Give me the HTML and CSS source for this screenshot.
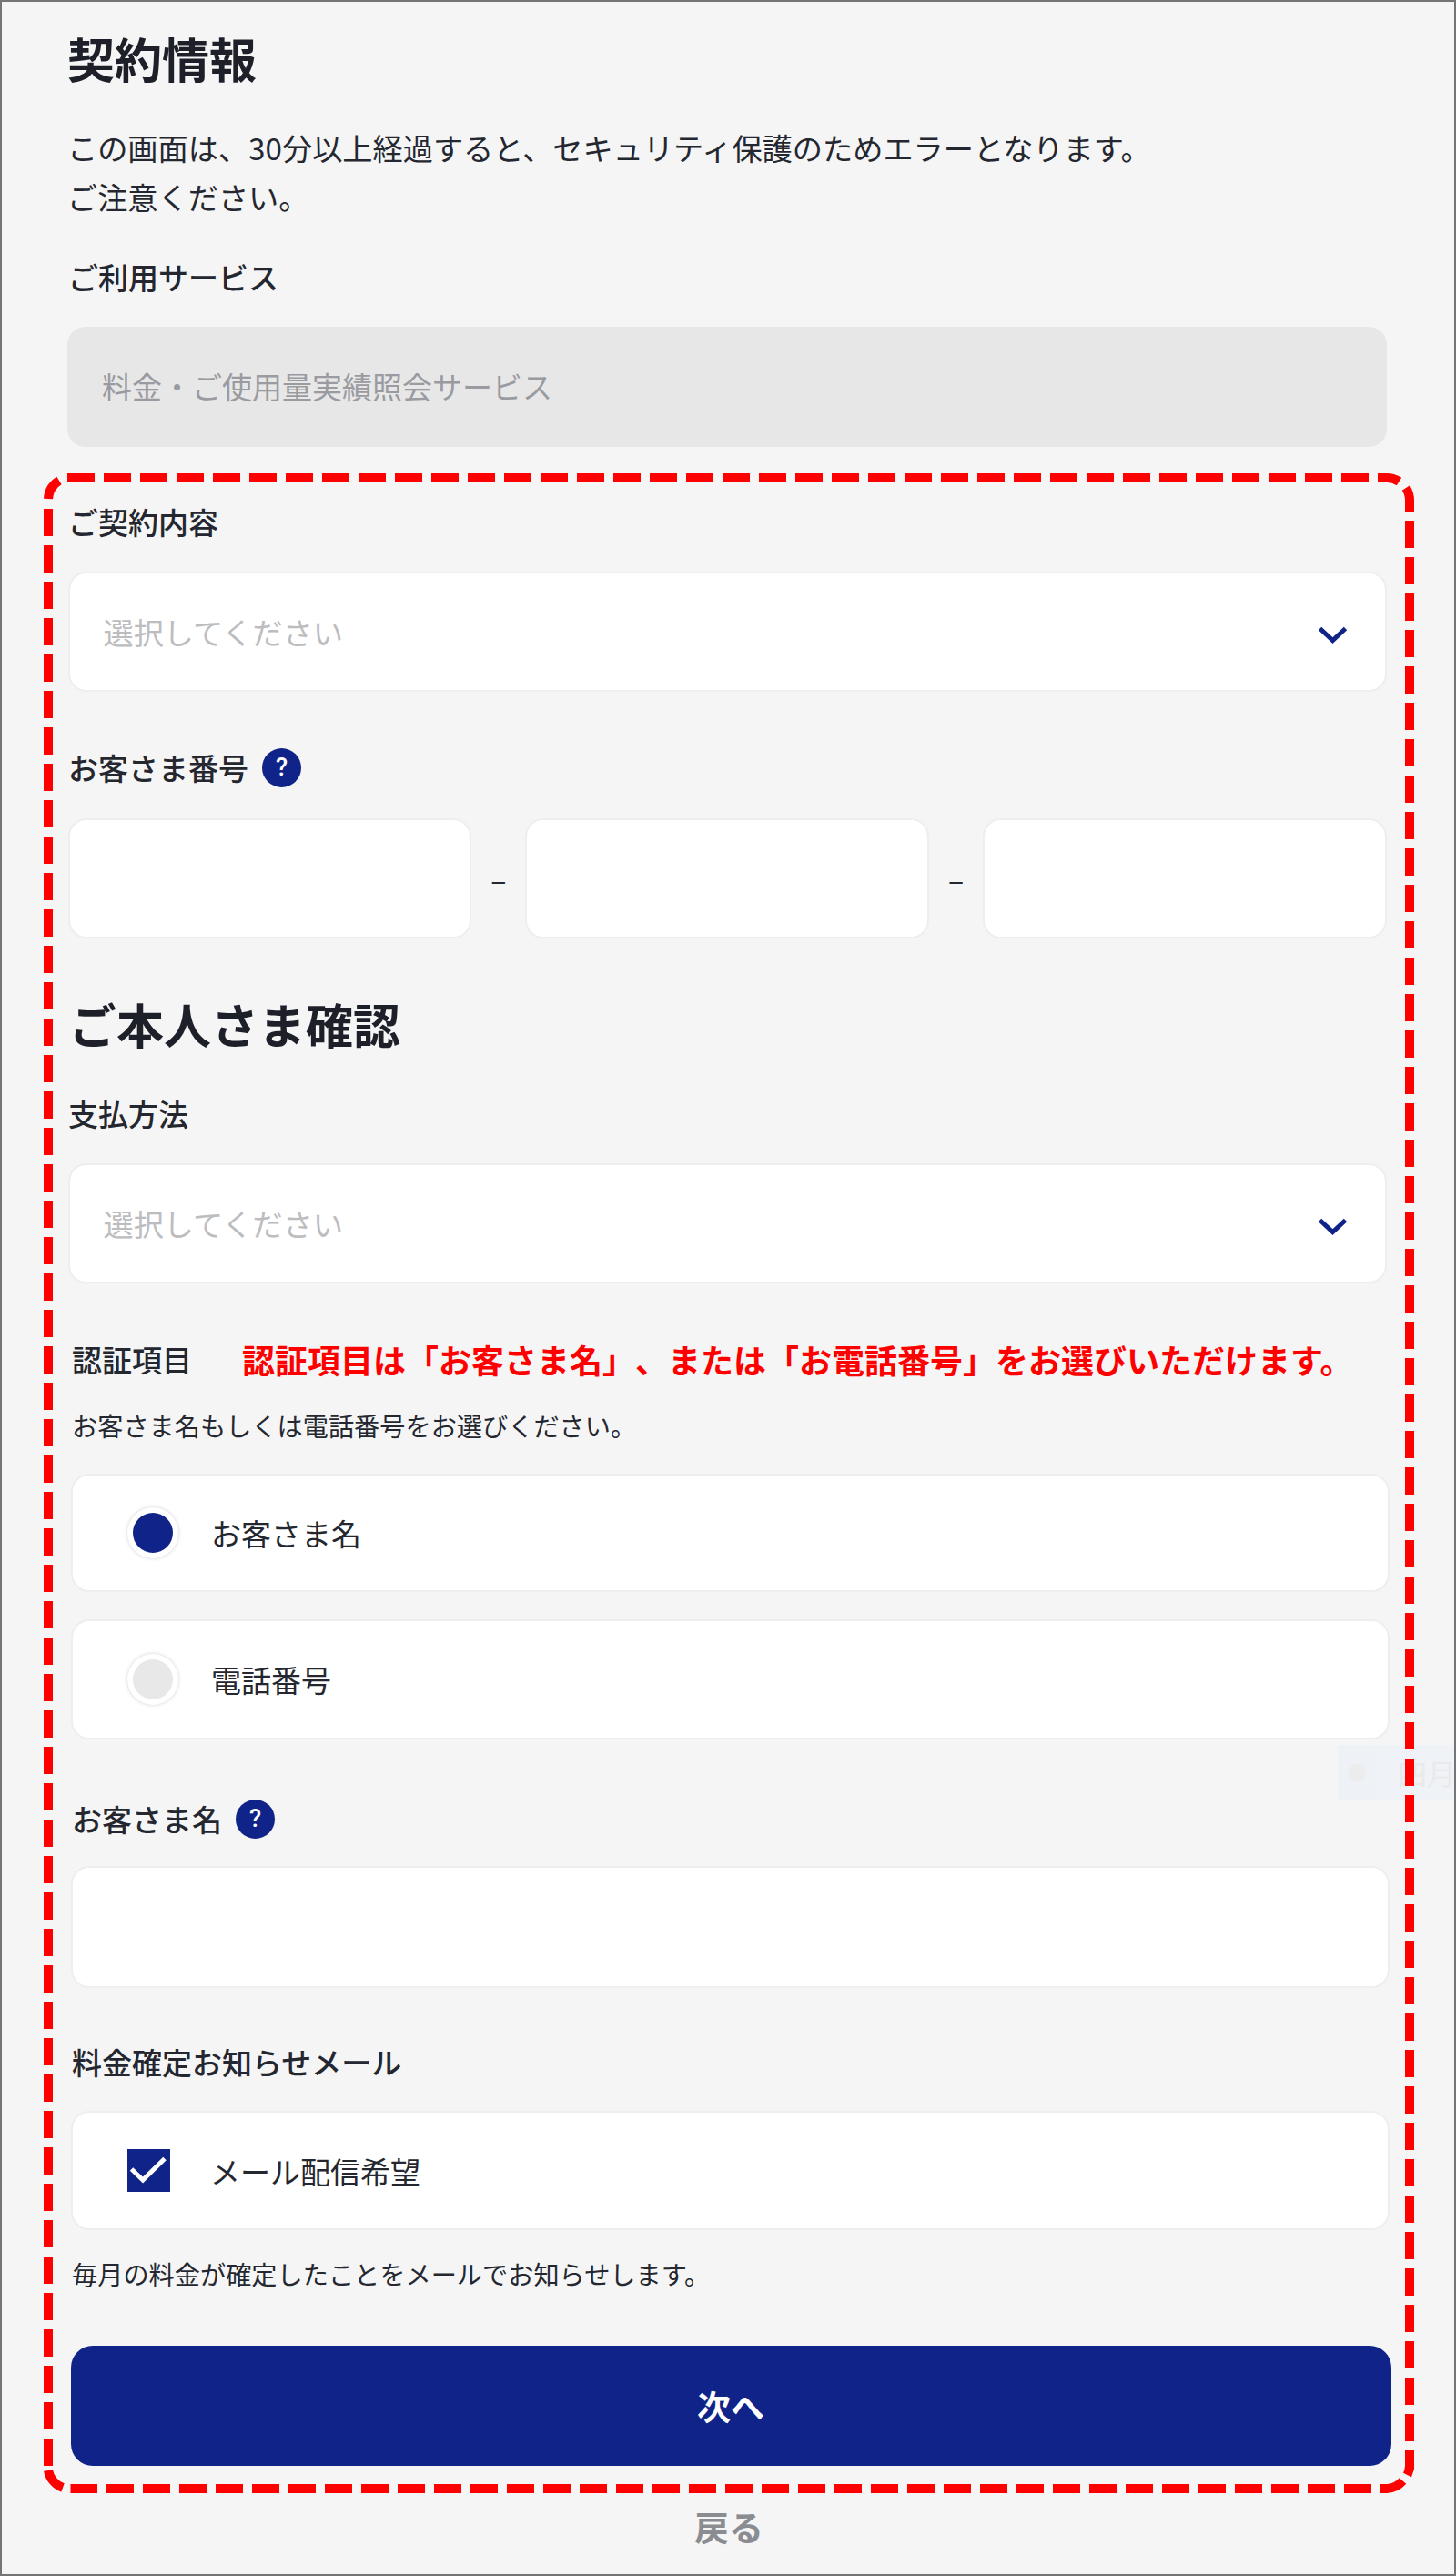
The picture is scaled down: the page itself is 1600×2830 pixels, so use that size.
FILE: index.html
```html
<!DOCTYPE html>
<html lang="ja">
<head>
<meta charset="utf-8">
<title>契約情報</title>
<link rel="stylesheet" href="styles.css">
</head>
<body>
<main class="frame">
  <section class="block-a">
    <h1 class="title">契約情報</h1>
    <p class="note">この画面は、30分以上経過すると、セキュリティ保護のためエラーとなります。<br>ご注意ください。</p>
    <div class="label label-service">ご利用サービス</div>
    <div class="readonly">料金・ご使用量実績照会サービス</div>
    <div class="label label-contract">ご契約内容</div>
    <div class="box select">
      <span class="placeholder">選択してください</span>
      <svg class="chevron" viewBox="0 0 33 19"><path d="M2.5 2.5 16.5 15.5 30.5 2.5"/></svg>
    </div>
    <div class="label label-number">お客さま番号<span class="help">?</span></div>
    <div class="triple">
      <div class="box triple-input"></div>
      <span class="sep">–</span>
      <div class="box triple-input"></div>
      <span class="sep">–</span>
      <div class="box triple-input"></div>
    </div>
    <h2 class="subtitle">ご本人さま確認</h2>
    <div class="label label-pay">支払方法</div>
    <div class="box select">
      <span class="placeholder">選択してください</span>
      <svg class="chevron" viewBox="0 0 33 19"><path d="M2.5 2.5 16.5 15.5 30.5 2.5"/></svg>
    </div>
  </section>

  <section class="block-b">
    <div class="label label-auth">認証項目<span class="callout">認証項目は「お客さま名」、または「お電話番号」をお選びいただけます。</span></div>
    <p class="small small-auth">お客さま名もしくは電話番号をお選びください。</p>
    <div class="box option option-first">
      <span class="radio"><span class="radio-dot radio-on"></span></span>
      <span class="option-text">お客さま名</span>
    </div>
    <div class="box option option-second">
      <span class="radio"><span class="radio-dot"></span></span>
      <span class="option-text">電話番号</span>
    </div>
    <div class="label label-name">お客さま名<span class="help">?</span></div>
    <div class="box name-input"></div>
    <div class="label label-mail">料金確定お知らせメール</div>
    <div class="box option option-mail">
      <svg class="check" viewBox="0 0 47 47"><rect width="47" height="47"/><path d="M4.5 22 17 34 41 10.5"/></svg>
      <span class="option-text">メール配信希望</span>
    </div>
    <p class="small small-mail">毎月の料金が確定したことをメールでお知らせします。</p>
  </section>

  <button class="next">次へ</button>
  <div class="back">戻る</div>

  <div class="ghost"><span class="ghost-icon"><span class="ghost-dot"></span></span><span class="ghost-text">四月</span></div>

  <svg class="annotation" viewBox="0 0 1600 2830">
    <path class="dash" d="M74 525H1524A25 25 0 0 1 1537.5 529"/>
    <path class="solid" d="M1545 536A25 25 0 0 1 1549 550V562"/>
    <path class="dash" d="M1549 572V2714"/>
    <path class="solid" d="M1549 2692V2709A25 25 0 0 1 1546.5 2719"/>
    <path class="solid" d="M1541.5 2725.5A25 25 0 0 1 1524 2734H1517"/>
    <path class="dash" d="M1507 2734H77.5"/>
    <path class="solid" d="M69 2733A25 25 0 0 1 53 2714"/>
    <path class="dash" d="M53 2709V558"/>
    <path class="solid" d="M53 548A25 25 0 0 1 65 528"/>
  </svg>
</main>
</body>
</html>
```
FILE: styles.css
```css
* { box-sizing: border-box; }

html, body { margin: 0; padding: 0; }

body {
  font-family: "Noto Sans CJK JP", "Noto Sans", sans-serif;
  color: #24272f;
  text-spacing-trim: space-all;
}

.frame {
  position: relative;
  width: 1600px;
  height: 2830px;
  border: 2px solid #757575;
  background: #f5f5f5;
  overflow: hidden;
  padding-left: 72px;
}

.title, .subtitle {
  margin: 0;
  font-size: 52px;
  line-height: 70px;
  font-weight: 700;
  color: #1d2029;
}
.title { margin-top: 27px; }
.subtitle { margin-top: 59px; width: 500px; margin-left: 2px; }

.note {
  margin: 36px 0 0;
  font-size: 33.2px;
  line-height: 54px;
  white-space: nowrap;
}

.label {
  display: flex;
  align-items: center;
  font-size: 33px;
  line-height: 46px;
  font-weight: 500;
  white-space: nowrap;
  color: #24272f;
}
.label-service { margin-top: 38px; margin-left: 1px; }
.label-contract { margin-top: 59px; margin-left: 1px; }
.label-number { margin-top: 60px; margin-left: 1px; }
.label-pay { margin-top: 40px; margin-left: 1px; }
.label-auth { margin-top: 60px; margin-left: 1px; }
.label-name { margin-top: 64px; margin-left: 1px; }
.label-mail { margin-top: 58px; margin-left: 1px; }

.readonly {
  margin-top: 32px;
  width: 1450px;
  height: 132px;
  display: flex;
  align-items: center;
  padding: 0 0 3px 38px;
  border-radius: 20px;
  background: #e7e7e7;
  color: #9a9ba1;
  font-size: 33px;
}

.box {
  background: #fff;
  border: 2px solid #eeeeee;
  border-radius: 20px;
}

.select {
  margin: 32px 0 0 0.5px;
  width: 1449.5px;
  height: 132px;
  display: flex;
  align-items: center;
  justify-content: space-between;
  padding: 0 41px 0 37px;
}
.placeholder {
  font-size: 33.2px;
  color: #bdbdc0;
  position: relative;
  top: -1px;
}
.chevron { width: 33px; height: 19px; fill: none; stroke: #0f2389; stroke-width: 5; margin-top: 6px; }

.help {
  display: flex;
  align-items: center;
  justify-content: center;
  width: 43px;
  height: 43px;
  margin-left: 15px;
  border-radius: 50%;
  background: #0f2389;
  color: #fff;
  font-family: "Roboto", sans-serif;
  font-size: 27px;
  font-weight: 500;
}

.triple {
  display: flex;
  align-items: center;
  margin: 33px 0 0 0.5px;
  width: 1449.5px;
}
.triple-input { flex: 1; height: 132px; }
.sep { width: 59px; text-align: center; font-size: 32px; line-height: 40px; }

.block-b { margin-left: 4px; width: 1449px; }

.callout {
  margin-left: 55px;
  font-size: 36px;
  font-weight: 700;
  color: #ff0000;
}

.small {
  margin: 0 0 0 1px;
  font-size: 28.2px;
  line-height: 40px;
  white-space: nowrap;
}
.small-auth { margin-top: 30px; }
.small-mail { margin-top: 28px; }

.option {
  display: flex;
  align-items: center;
  width: 100%;
}
.option-first { margin-top: 33px; height: 130px; padding-left: 60px; }
.option-second { margin-top: 30px; height: 132px; padding-left: 60px; }
.option-mail { margin-top: 31px; height: 131px; padding-left: 60px; }
.option-text { font-size: 33px; line-height: 46px; margin-left: 36px; }
.check + .option-text { margin-left: 44px; }

.radio {
  display: flex;
  align-items: center;
  justify-content: center;
  width: 56px;
  height: 56px;
  border-radius: 50%;
  background: #fff;
  box-shadow: 0 0 4px rgba(0, 0, 0, 0.18);
}
.radio-dot { width: 44px; height: 44px; border-radius: 50%; background: #e8e8e8; }
.radio-on { background: #0f2389; }

.name-input { margin-top: 29px; height: 134px; }

.check { width: 47px; height: 47px; fill: #0f2389; }
.check path { fill: none; stroke: #fff; stroke-width: 5; }

.next {
  display: block;
  margin: 59px 0 0 3.5px;
  width: 1451px;
  height: 132px;
  border: 0;
  border-radius: 24px;
  background: #0f2389;
  color: #fff;
  font-family: inherit;
  font-size: 37px;
  font-weight: 700;
}

.back {
  margin: 41px 0 0 -70px;
  text-align: center;
  font-size: 38px;
  line-height: 50px;
  font-weight: 700;
  color: #8a8c92;
}

.ghost {
  position: absolute;
  left: 1468px;
  top: 1915px;
  width: 130px;
  height: 61px;
  display: flex;
  background: #eff2f7;
}
.ghost-icon { width: 59px; display: flex; align-items: center; justify-content: center; background: #eef1f6; }
.ghost-dot { width: 20px; height: 20px; border-radius: 50%; background: #ececec; }
.ghost-text { margin-left: 24px; font-size: 32px; line-height: 61px; color: #eaeaea; white-space: nowrap; }

.annotation {
  position: absolute;
  left: -2px;
  top: -2px;
  width: 1600px;
  height: 2830px;
  pointer-events: none;
}
.annotation path { fill: none; stroke: #ff0000; stroke-width: 10; }
.annotation .dash { stroke-dasharray: 30 10; }
```
